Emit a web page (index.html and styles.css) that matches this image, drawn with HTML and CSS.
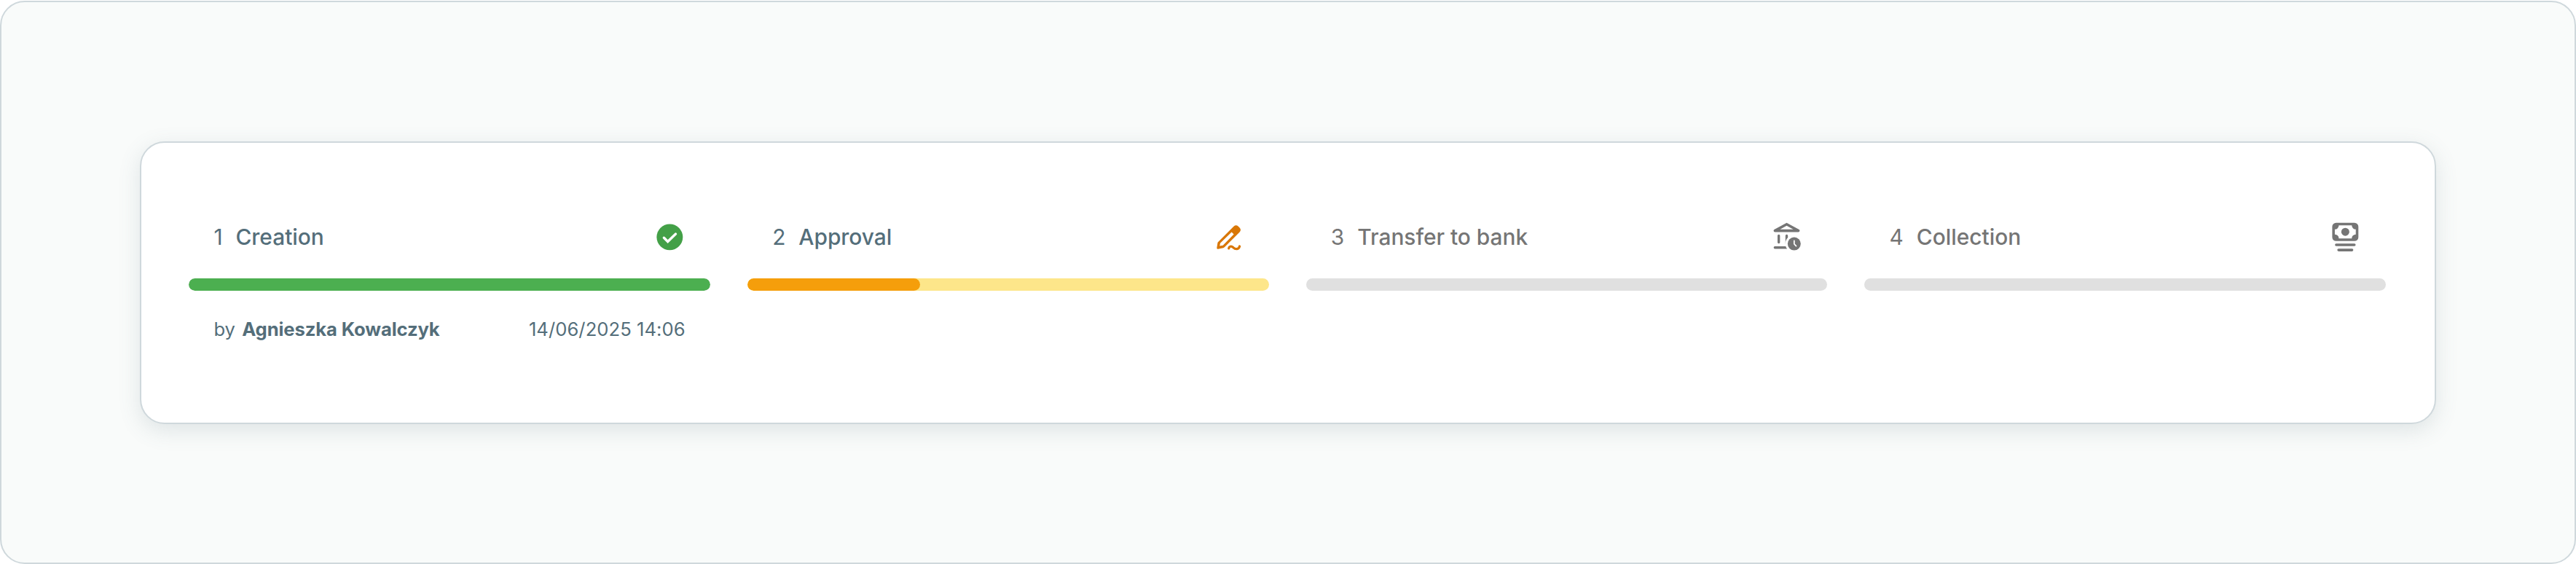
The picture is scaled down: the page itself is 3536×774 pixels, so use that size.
FILE: index.html
```html
<!DOCTYPE html>
<html lang="en">
<head>
<meta charset="utf-8">
<title>Payment progress</title>
<link rel="stylesheet" href="styles.css">
</head>
<body>
<main class="stage">
  <section class="card">
    <article class="step step-done">
      <header class="step-head">
        <span class="num">1</span><h2 class="title">Creation</h2>
        <svg class="icon" viewBox="0 0 24 24"><circle cx="12" cy="12" r="10.1" fill="#43a047"/><path d="M7.5 12.5l3 3L16.6 9.6" fill="none" stroke="#fff" stroke-width="1.9" stroke-linecap="round"/></svg>
      </header>
      <div class="bar"><div class="fill" style="width:100%"></div></div>
      <footer class="meta"><span class="by">by <b class="name">Agnieszka Kowalczyk</b></span><time class="date">14/06/2025 14:06</time></footer>
    </article>
    <article class="step step-active">
      <header class="step-head">
        <span class="num">2</span><h2 class="title">Approval</h2>
        <svg class="icon" viewBox="0 0 24 24"><path fill="#d97706" fill-rule="evenodd" d="M3.9 15.9L16 3.8Q17.8 2.2 19.6 3.8L20.6 4.8Q22.1 6.5 20.6 8.2L8.9 19.9Q8.5 20.3 8 20.4L3.9 21.2Q2.8 21.4 3 20.3L3.6 16.5Q3.6 16.2 3.9 15.9ZM5.6 16.7L5.2 18.9L7.7 18.4L16.1 9.8L14.4 8.1Z"/><path d="M12.2 20.8C12.5 19 14.2 18.7 15.6 20C17.4 21.8 20 21.7 20.6 19.1" fill="none" stroke="#d97706" stroke-width="1.8" stroke-linecap="round"/></svg>
      </header>
      <div class="bar"><div class="fill" style="width:33.1%"></div></div>
    </article>
    <article class="step step-idle">
      <header class="step-head">
        <span class="num">3</span><h2 class="title">Transfer to bank</h2>
        <svg class="icon" viewBox="0 0 24 24"><path fill="#757575" fill-rule="evenodd" d="M11.6 1.2Q12.1 .9 12.6 1.2L21.7 6.2Q22.2 6.5 22.2 7.2Q22.1 8.1 21.1 8.1H3.1Q2.1 8.1 2 7.2Q2 6.5 2.5 6.2ZM12.1 3.2L7 6.1H17.2Z"/><path d="M6 11V16.1M12.1 11V17M3 20.1H13" fill="none" stroke="#757575" stroke-width="1.9" stroke-linecap="round"/><circle cx="17.9" cy="17.2" r="6.8" fill="#fff"/><circle cx="17.9" cy="17.2" r="5.05" fill="#757575"/><path d="M17.9 14.8V17.3L19.4 18.9" fill="none" stroke="#fff" stroke-width="1" stroke-linecap="round"/></svg>
      </header>
      <div class="bar"></div>
    </article>
    <article class="step step-idle">
      <header class="step-head">
        <span class="num">4</span><h2 class="title">Collection</h2>
        <svg class="icon" viewBox="0 0 24 24"><rect x="1.9" y="1" width="20.2" height="14.1" rx="3" fill="#757575"/><path d="M7 3H17A3 3 0 0 0 20.1 6V10A3 3 0 0 0 17 13.1H7A3 3 0 0 0 3.9 10V6A3 3 0 0 0 7 3Z" fill="#fff"/><circle cx="12" cy="8" r="3.1" fill="#757575"/><path d="M5 18H19M6.8 22H17.2" stroke="#757575" stroke-width="2" stroke-linecap="round"/></svg>
      </header>
      <div class="bar"></div>
    </article>
  </section>
</main>
</body>
</html>
```
FILE: styles.css
```css
* { box-sizing: border-box; }
body { display: flow-root; margin: 0; background: #fff; font-family: Inter, "Liberation Sans", sans-serif; color: #546e7a; }
.stage { height: 773px; margin-top: 1px; padding: 190.7px 190px 0; border: 2px solid #cfd8dc; border-radius: 34px; background: #f9fbfa; }
.card { display: grid; grid-template-columns: repeat(4, 1fr); gap: 51.2px; height: 388.3px; padding: 97.3px 67px 0 65.3px; border: 2px solid #cfd8dc; border-radius: 34px; background: #fff; box-shadow: 0 8.5px 30px rgba(84, 110, 122, .16); }
.step-head { display: flex; align-items: center; height: 64px; padding: 0 34.13px; }
.num, .title { margin: 0; font-size: 29.87px; line-height: 42.67px; }
.num { font-weight: 400; letter-spacing: .3px; margin-right: 17.6px; }
.title { font-weight: 500; letter-spacing: 0; }
.icon { width: 42.67px; height: 42.67px; margin-left: auto; display: block; }
.bar { height: 17px; margin-top: 25px; border-radius: 9px; background: #e0e0e0; overflow: hidden; }
.fill { height: 100%; border-radius: 9px; }
.step-done .fill { background: #4caf50; }
.step-active .bar { background: #fde68a; }
.step-active .fill { background: #f59e0b; }
.step-idle { color: #757575; }
.meta { display: flex; justify-content: space-between; padding: 34px 34.13px 0; font-size: 25.6px; line-height: 38px; }
.name { font-weight: 700; margin-left: 2px; letter-spacing: -.1px; }
.date { letter-spacing: .06px; }
```
